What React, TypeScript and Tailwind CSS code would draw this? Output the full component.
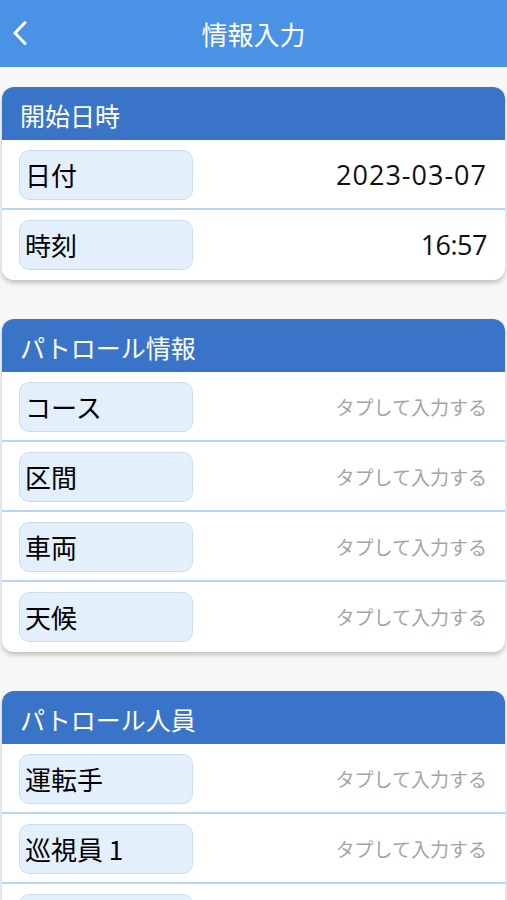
type Row = { label: string; value?: string };
type Section = { title: string; rows: Row[] };

const sections: Section[] = [
  {
    title: "開始日時",
    rows: [
      { label: "日付", value: "2023-03-07" },
      { label: "時刻", value: "16:57" },
    ],
  },
  {
    title: "パトロール情報",
    rows: [{ label: "コース" }, { label: "区間" }, { label: "車両" }, { label: "天候" }],
  },
  {
    title: "パトロール人員",
    rows: [{ label: "運転手" }, { label: "巡視員 1" }, { label: "巡視員 2" }, { label: "巡視員 3" }],
  },
];

const font = { fontFamily: '"Noto Sans CJK JP", "Noto Sans", sans-serif' };

function FieldRow({ row, last }: { row: Row; last: boolean }) {
  const isDate = row.value?.includes("-");
  return (
    <>
      <div
        className={`flex items-center justify-between pl-[17px] pr-[18px] pt-[1px] ${
          last ? "h-[70px] pb-[2px]" : "h-[68px]"
        }`}
      >
        <div className="flex items-center w-[174px] h-[50px] rounded-[10px] bg-[#e4effc] border border-[#c9def5] pl-[5px] text-[26px] text-black leading-none">
          {row.label}
        </div>
        {row.value ? (
          <span
            className={`text-[27px] text-[#111] leading-none ${isDate ? "tracking-[1px]" : "tracking-[-0.5px]"}`}
            style={{ fontFamily: '"Open Sans", "Noto Sans", sans-serif' }}
          >
            {row.value}
          </span>
        ) : (
          <span className="text-[19px] text-[#a3a3a3] leading-none">タプして入力する</span>
        )}
      </div>
      {!last && <div className="h-[2px] bg-[#b8d6f4]" />}
    </>
  );
}

export default function App() {
  return (
    <div className="min-h-[900px] bg-[#f7f7f7]" style={font}>
      <header className="relative flex items-center justify-center h-[67px] bg-[#4a92e6]">
        <button className="absolute left-[11px] top-[19px] text-white">
          <svg width="18" height="28" viewBox="0 0 18 28" fill="none">
            <path
              d="M14 3.5 L4 14 L14 24.5"
              stroke="currentColor"
              strokeWidth="3"
              strokeLinecap="round"
              strokeLinejoin="round"
            />
          </svg>
        </button>
        <h1 className="text-[26px] text-white leading-none">情報入力</h1>
      </header>

      <div className="flex flex-col gap-[39px] pt-[20px] px-[2px]">
        {sections.map((section) => (
          <section
            key={section.title}
            className="rounded-[12px] bg-white overflow-hidden shadow-[0_3px_5px_rgba(0,0,0,0.22)]"
          >
            <div className="flex items-center h-[53px] pl-[18px] pt-[3px] bg-[#3a74c9] text-[25px] text-white leading-none">
              {section.title}
            </div>
            {section.rows.map((row, i) => (
              <FieldRow key={row.label} row={row} last={i === section.rows.length - 1} />
            ))}
          </section>
        ))}
      </div>
    </div>
  );
}
